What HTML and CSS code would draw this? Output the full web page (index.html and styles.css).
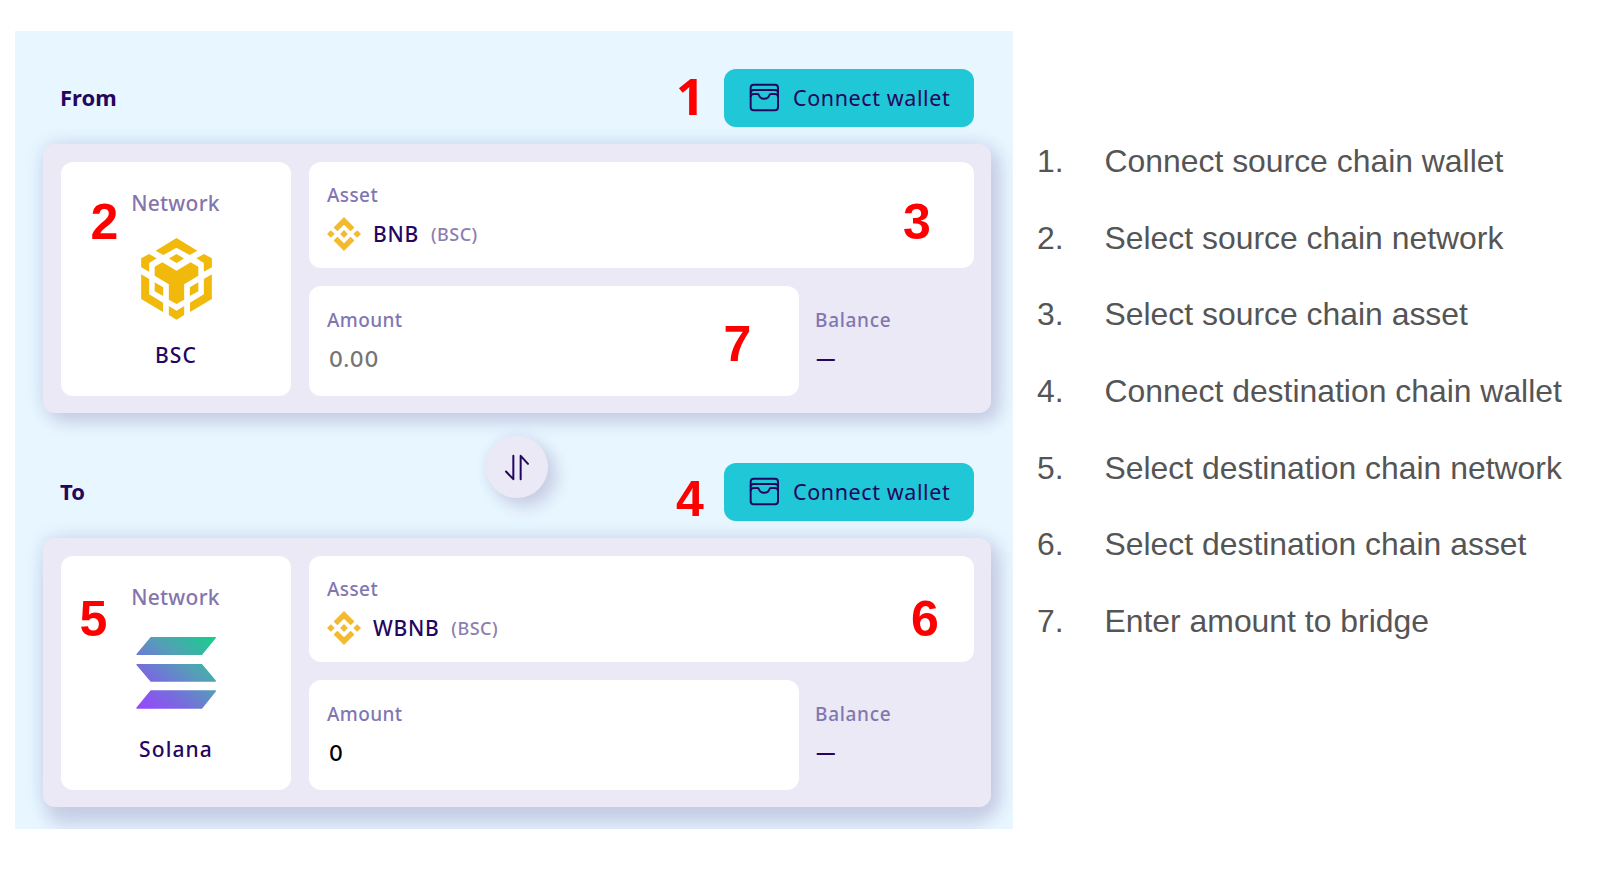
FILE: index.html
```html
<!DOCTYPE html>
<html lang="en">
<head>
<meta charset="utf-8">
<title>Bridge guide</title>
<link rel="stylesheet" href="styles.css">
</head>
<body>
<svg class="defs" width="0" height="0" aria-hidden="true">
  <defs>
    <linearGradient id="sol" gradientUnits="userSpaceOnUse" x1="340" y1="520" x2="540" y2="280">
      <stop offset="0" stop-color="#9945ff"/>
      <stop offset=".3" stop-color="#776bdf"/>
      <stop offset=".62" stop-color="#559fb7"/>
      <stop offset="1" stop-color="#14d08b"/>
    </linearGradient>
    <symbol id="wallet" viewBox="268 100 93 87">
      <g fill="none" stroke="#24055f" stroke-width="5.800" stroke-linejoin="round">
        <rect x="273" y="105.500" width="82" height="76" rx="9"/>
        <path d="M273 129q0-8 9-8h64q9 0 9 8"/>
        <path d="M273 142q0-9 9-9h11q4 0 5 4q3 10.500 15.500 10.500t15.500-10.500q1-4 5-4h12q9 0 9 9"/>
      </g>
    </symbol>
    <symbol id="bnb" viewBox="0 0 126.610 126.610">
      <path fill="#f3ba2f" d="M38.730 53.200l24.590-24.580 24.600 24.600 14.300-14.310L63.320 0 24.430 38.900zM0 63.310l14.300-14.310 14.310 14.310-14.310 14.300zM38.730 73.410l24.590 24.590 24.600-24.600 14.310 14.290-38.900 38.910-38.910-38.880zM98 63.310l14.300-14.310 14.310 14.300-14.310 14.320zM77.830 63.300 63.320 48.780 48.790 63.300 63.320 77.830z"/>
    </symbol>
  </defs>
</svg>
<div class="page">
  <main class="bridge">
    <header class="head">
      <h2 class="title">From</h2>
      <button class="connect"><svg class="wallet"><use href="#wallet"/></svg><span>Connect wallet</span></button>
    </header>
    <section class="card">
      <div class="tile network">
        <span class="network-label">Network</span>
        <svg class="chain" viewBox="48 53 243 246">
          <g fill="#f0b90b">
            <path d="M169.500 53 232 91 209 104 169.500 82 130 104 107 91z"/>
            <path d="M169.500 101 192 114.500 169.500 128 147 114.500z"/>
            <path d="M63.500 114 87 101 110 114 87.500 128V154L63.500 141z"/>
            <path d="M275.500 114 252 101 229 114 251.500 128V154L275.500 141z"/>
            <path d="M104 139 127 126 169.500 151 212 126 235 139V166L192.500 192V238L169.500 251 146.500 238V192L104 166z"/>
            <path d="M63.500 162 87.500 176V222L129 247V275L63.500 236z"/>
            <path d="M275.500 162 251.500 176V222L210 247V275L275.500 236z"/>
            <path d="M104 186 129.500 201V227L104 213z"/>
            <path d="M235 186 209.500 201V227L235 213z"/>
            <path d="M146.500 257 169.500 271 192.500 257V284L169.500 298 146.500 284z"/>
          </g>
        </svg>
        <span class="network-name">BSC</span>
      </div>
      <div class="fields">
        <div class="tile asset">
          <span class="label">Asset</span>
          <div class="coin"><svg class="coin-icon"><use href="#bnb"/></svg><span class="symbol">BNB</span><span class="origin">(BSC)</span></div>
        </div>
        <div class="row">
          <div class="tile amount"><span class="label amount-label">Amount</span><span class="value empty">0.00</span></div>
          <div class="balance"><span class="label balance-label">Balance</span><span class="dash">—</span></div>
        </div>
      </div>
    </section>
    <div class="between">
      <button class="swap" aria-label="Swap direction"><svg viewBox="103 101 78 80"><path d="M131 106V176L109 153M153 176V106L175 130" fill="none" stroke="#24055f" stroke-width="6" stroke-linecap="round" stroke-linejoin="round"/></svg></button>
    </div>
    <header class="head second">
      <h2 class="title">To</h2>
      <button class="connect"><svg class="wallet"><use href="#wallet"/></svg><span>Connect wallet</span></button>
    </header>
    <section class="card last">
      <div class="tile network">
        <span class="network-label">Network</span>
        <svg class="chain" viewBox="317 276 243 246">
          <g fill="url(#sol)" stroke="url(#sol)" stroke-width="4" stroke-linejoin="round">
            <path d="M362 293H555L514 343H320z"/>
            <path d="M320 374H514L555 423H362z"/>
            <path d="M362 453H555L514 504H320z"/>
          </g>
        </svg>
        <span class="network-name">Solana</span>
      </div>
      <div class="fields">
        <div class="tile asset">
          <span class="label">Asset</span>
          <div class="coin"><svg class="coin-icon"><use href="#bnb"/></svg><span class="symbol">WBNB</span><span class="origin">(BSC)</span></div>
        </div>
        <div class="row">
          <div class="tile amount"><span class="label amount-label">Amount</span><span class="value">0</span></div>
          <div class="balance"><span class="label balance-label">Balance</span><span class="dash">—</span></div>
        </div>
      </div>
    </section>
  </main>
  <ol class="steps">
    <li><span class="num">1.</span>Connect source chain wallet</li>
    <li><span class="num">2.</span>Select source chain network</li>
    <li><span class="num">3.</span>Select source chain asset</li>
    <li><span class="num">4.</span>Connect destination chain wallet</li>
    <li><span class="num">5.</span>Select destination chain network</li>
    <li><span class="num">6.</span>Select destination chain asset</li>
    <li><span class="num">7.</span>Enter amount to bridge</li>
  </ol>
  <span class="mark m1">1</span>
  <span class="mark m2">2</span>
  <span class="mark m3">3</span>
  <span class="mark m4">4</span>
  <span class="mark m5">5</span>
  <span class="mark m6">6</span>
  <span class="mark m7">7</span>
</div>
</body>
</html>
```

FILE: styles.css
```css
* { box-sizing: border-box; }
body { margin: 0; background: #fff; font-family: "Noto Sans", sans-serif; color: #24055f; }
button { border: 0; padding: 0; font: inherit; color: inherit; }
.defs { position: absolute; }
.page { position: relative; width: 1600px; height: 876px; overflow: hidden; display: flex; align-items: flex-start; padding: 31px 0 0 15px; }

.bridge { width: 998px; height: 798px; overflow: hidden; background: #e8f7ff; padding: 38px 22px 0 28px; flex: none; }
.head { height: 58px; display: flex; align-items: center; justify-content: space-between; padding: 0 17px 0 17px; }
.title { margin: 0; padding-bottom: 2px; font-size: 22px; line-height: 30px; font-weight: 700; }
.connect { width: 250px; height: 58px; border-radius: 12px; background: #20c7d6; display: flex; align-items: center; padding: 0 0 1px 25px; font-size: 21.5px; font-weight: 450; letter-spacing: .6px; white-space: nowrap; }
.wallet { width: 31px; height: 29px; margin-right: 13px; }

.card { width: 948px; height: 269px; margin-top: 17px; padding: 18px 17px 17px 18px; border-radius: 12px; background: #ebe9f5; display: flex; gap: 18px; box-shadow: 8px 8px 18px #c6cbe3, 0 0 20px rgba(160, 175, 215, .4); }
.tile { background: #fff; border-radius: 12px; }
.network { width: 230px; height: 234px; padding-top: 26px; display: flex; flex-direction: column; align-items: center; line-height: 30px; font-size: 21px; }
.network-label { color: #8475ab; font-weight: 500; letter-spacing: .25px; margin-left: -1px; }
.chain { width: 81px; height: 82px; margin: 20px 0 20px; }
.network-name { font-weight: 500; letter-spacing: 1.100px; }
.fields { width: 665px; display: flex; flex-direction: column; gap: 18px; }
.asset { height: 106px; padding: 21px 0 0 18px; }
.label { display: block; font-size: 19px; line-height: 24px; font-weight: 500; letter-spacing: .4px; color: #8176b1; }
.coin { display: flex; align-items: center; height: 34px; margin-top: 10px; line-height: 30px; }
.coin-icon { width: 34px; height: 34px; margin-right: 12px; }
.symbol { font-size: 21px; font-weight: 500; letter-spacing: .7px; }
.origin { font-size: 18px; font-weight: 500; color: #8c7db0; margin-left: 12px; letter-spacing: .5px; }
.row { display: flex; }
.amount { width: 490px; height: 110px; padding: 22px 0 0 18px; }
.value { display: block; margin: 12px 0 0 2px; font-family: Inter, sans-serif; font-size: 21.5px; font-weight: 500; line-height: 30px; letter-spacing: .8px; color: #000; }
.empty { color: #757575; }
.balance { padding: 22px 0 0 16px; }
.balance-label { letter-spacing: .7px; }
.dash { display: block; margin: 11px 0 0 1px; font-size: 19.500px; line-height: 30px; font-weight: 600; }

.between { height: 50px; display: flex; justify-content: center; padding-top: 23px; }
.swap { width: 62px; height: 62px; flex: none; border-radius: 50%; background: #ebe9f5; display: flex; align-items: center; justify-content: center; box-shadow: 8px 8px 18px #c6cbe3, 0 0 12px rgba(180, 190, 225, .3); }
.swap svg { width: 26px; height: 27px; }
.last { box-shadow: 8px 8px 18px #c6cbe3, 0 0 20px rgba(160, 175, 215, .4), 0 26px 18px -6px #d3def0; }

.steps { margin: 92px 0 0 25px; padding: 0; list-style: none; font-family: "Liberation Sans", Arial, sans-serif; font-size: 31.900px; color: #555; white-space: nowrap; }
.steps li { display: flex; height: 76.700px; line-height: 77px; }
.num { width: 66.500px; margin-left: -1px; margin-right: 1px; }

.mark { position: absolute; font: 700 50px/50px "Liberation Sans", Arial, sans-serif; color: #f00; }
.m1 { left: 676px; top: 70.500px; font-family: "Noto Sans", sans-serif; }
.m2 { left: 90.500px; top: 196.500px; }
.m3 { left: 903px; top: 196.500px; }
.m4 { left: 676px; top: 473.500px; }
.m5 { left: 79.500px; top: 593.500px; }
.m6 { left: 911px; top: 593.500px; }
.m7 { left: 723.500px; top: 319px; }
```
